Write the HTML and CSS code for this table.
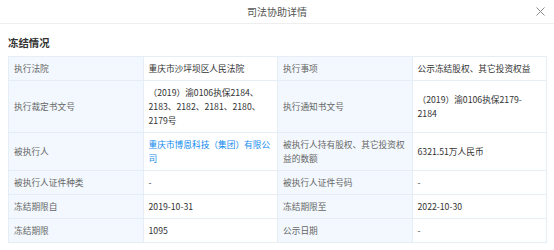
FILE: index.html
```html
<!DOCTYPE html>
<html lang="zh-CN">
<head>
<meta charset="utf-8">
<link rel="stylesheet" href="styles.css">
</head>
<body>
<div class="modal">
  <div class="modal-header">
    <span class="modal-title">司法协助详情</span>
    <span class="close" aria-label="关闭">
      <svg width="9" height="9" viewBox="0 0 9 9"><path d="M0.5 0.5 L8.5 8.5 M8.5 0.5 L0.5 8.5" stroke="#8a8a8a" stroke-width="1" fill="none"/></svg>
    </span>
  </div>
  <div class="modal-body">
    <h3 class="section-title">冻结情况</h3>
    <table class="detail">
      <colgroup><col class="c"><col class="c"><col class="c"><col class="c"></colgroup>
      <tr>
        <td class="label">执行法院</td>
        <td class="value">重庆市沙坪坝区人民法院</td>
        <td class="label">执行事项</td>
        <td class="value">公示冻结股权、其它投资权益</td>
      </tr>
      <tr>
        <td class="label">执行裁定书文号</td>
        <td class="value">（2019）渝0106执保2184、2183、2182、2181、2180、2179号</td>
        <td class="label">执行通知书文号</td>
        <td class="value">（2019）渝0106执保2179-2184</td>
      </tr>
      <tr>
        <td class="label">被执行人</td>
        <td class="value"><a class="link" href="#">重庆市博恩科技（集团）有限公司</a></td>
        <td class="label">被执行人持有股权、其它投资权益的数额</td>
        <td class="value">6321.51万人民币</td>
      </tr>
      <tr>
        <td class="label">被执行人证件种类</td>
        <td class="value">-</td>
        <td class="label">被执行人证件号码</td>
        <td class="value">-</td>
      </tr>
      <tr>
        <td class="label">冻结期限自</td>
        <td class="value">2019-10-31</td>
        <td class="label">冻结期限至</td>
        <td class="value">2022-10-30</td>
      </tr>
      <tr>
        <td class="label">冻结期限</td>
        <td class="value">1095</td>
        <td class="label">公示日期</td>
        <td class="value">-</td>
      </tr>
    </table>
  </div>
</div>
</body>
</html>
```

FILE: styles.css
```css
html, body {
  margin: 0;
  padding: 0;
  background: #fff;
}
body {
  font-family: "Microsoft YaHei", "Noto Sans CJK SC", "Noto Sans", sans-serif;
  color: #333;
}
.modal {
  width: 554px;
  height: 250px;
  overflow: hidden;
}
.modal-header {
  position: relative;
  height: 23px;
  border-bottom: 1px solid #eeeeee;
  display: flex;
  align-items: center;
  justify-content: center;
}
.modal-title {
  font-size: 10px;
  line-height: 14px;
  color: #555;
}
.close {
  position: absolute;
  right: 9px;
  top: 7px;
  width: 9px;
  height: 9px;
  display: flex;
}
.modal-body {
  padding: 12px 7px 0 8px;
}
.section-title {
  margin: 0 0 6px 0;
  font-size: 10.4px;
  line-height: 14px;
  font-weight: bold;
  color: #333;
}
.detail {
  width: 539px;
  border-collapse: collapse;
  table-layout: fixed;
  font-size: 8.7px;
  line-height: 14px;
}
.detail .c {
  width: 25%;
}
.detail td {
  border: 1px solid #e6eef5;
  padding: 5px 5px 4px 5px;
  vertical-align: middle;
}
.detail .label {
  background: #f2f8fd;
  color: #666;
}
.detail .value {
  color: #333;
}
.link {
  color: #128bed;
  text-decoration: none;
}
```
